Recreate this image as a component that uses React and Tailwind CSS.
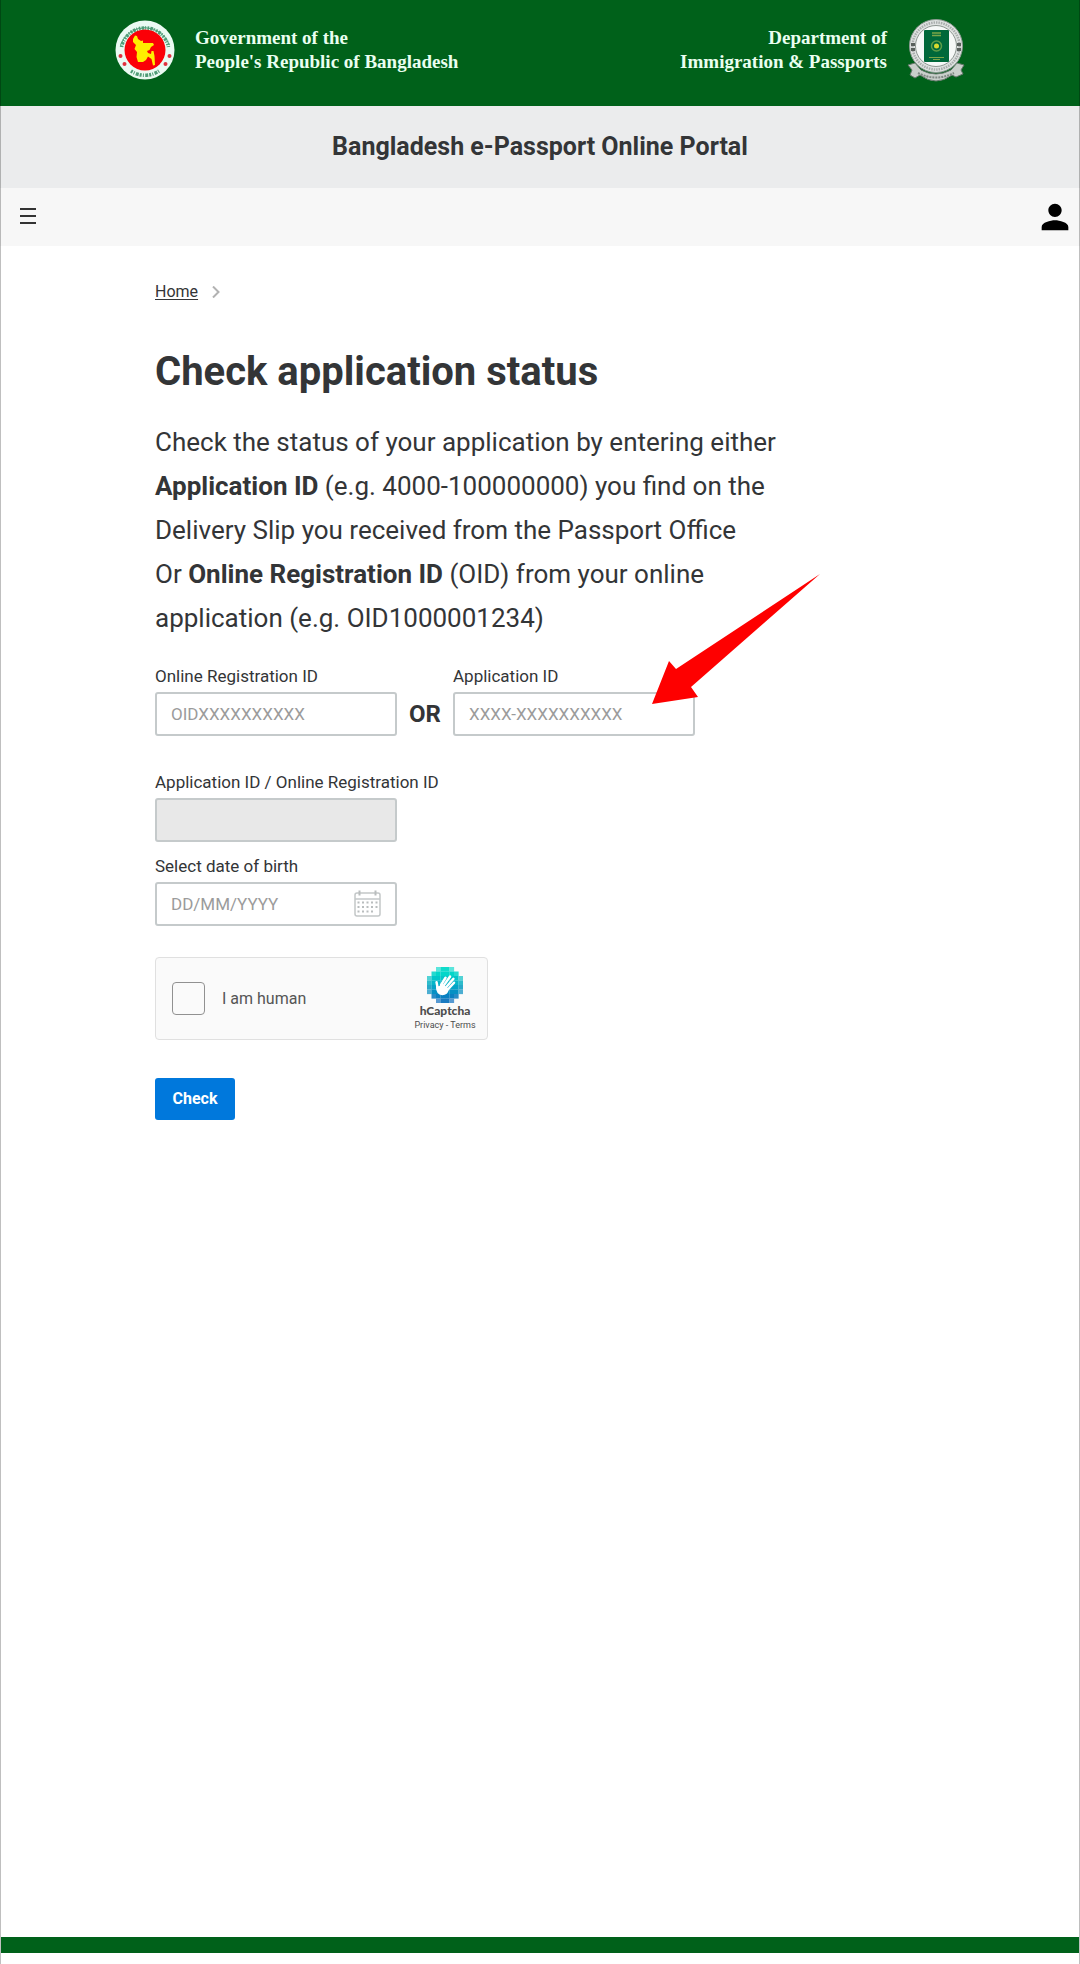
import React, { useState } from "react";
import { MdPerson } from "react-icons/md";

const SIDES = [-1, 1];

function GovernmentSeal() {
  return (
    <svg className="h-15 w-15 shrink-0" viewBox="0 0 60 60" aria-hidden="true">
      <circle cx="30" cy="30" r="29.5" fill="#eafaf2" />
      {/* lettering band */}
      <path d="M6.5 27 A24 24 0 0 1 53.5 27" fill="none" stroke="#4f9c77" strokeWidth="3.5" strokeDasharray="1.6 1.2 2.6 1 1 1.4" />
      <path d="M5.500 25 A26 26 0 0 1 54.500 25" fill="none" stroke="#4f9c77" strokeWidth="1" />
      <path d="M16 51 A25 25 0 0 0 44 51" fill="none" stroke="#4f9c77" strokeWidth="3.5" strokeDasharray="2 1.2 1 1.3 3 1" />
      <circle cx="30" cy="30" r="20.5" fill="#fb0007" />
      {SIDES.map((side) => (
        <g key={side} fill="#e0303c">
          <circle cx={30 + side * 24.5} cy="36" r="2" />
          <circle cx={30 + side * 20.5} cy="44" r="2" />
        </g>
      ))}
      <path
        d="M18 19 L20 15.500 L22 16 L23 19 L26 21 L28 20.500 L28 23 L38 23 L39 25 L36 27 L34.500 30 L32 31 L33 33 L36 34 L36.500 31 L38.500 31 L39.500 36 L40 45 L38 45.500 L36.500 39 L33 36.500 L31 40 L28 42 L23 42 L21.500 37 L22 32 L19.500 29 L21 25 L18 22 Z"
        fill="#ffee00"
      />
    </svg>
  );
}

function PassportSeal() {
  return (
    <svg className="h-16 w-[58px] shrink-0" viewBox="1 0 58 64" aria-hidden="true">
      {/* ribbon */}
      <path d="M2 47 L9 45 L15 52 Q30 60 45 52 L51 45 L58 47 L55 52 L57 56 L50 59 L46 57 Q38 63 30 63 Q22 63 14 57 L9 60 L4 57 L6 52 Z" fill="#c9cfcb" stroke="#66786c" strokeWidth="1" />
      <path d="M12 55 Q30 64 48 55" fill="none" stroke="#7f8883" strokeWidth="2" strokeDasharray="2 1" />
      <circle cx="30" cy="28" r="26.500" fill="#dfe2e1" stroke="#8d9a93" strokeWidth="1" />
      <circle cx="30" cy="28" r="23.500" fill="none" stroke="#a9adac" strokeWidth="2.500" strokeDasharray="1.500 1" />
      <circle cx="30" cy="28" r="20.500" fill="#f6f8f7" stroke="#8d9691" strokeWidth="1" />
      <path d="M5 25h4v3H5z M5 30h4v3H5z M51 25h4v3h-4z M51 30h4v3h-4z" fill="#59605c" />
      <rect x="18" y="12" width="25" height="32" rx="1" fill="#00683a" />
      <path d="M26 15h9M26 17.500h9" stroke="#7ba548" strokeWidth="1.500" />
      <circle cx="30.500" cy="28" r="5" fill="none" stroke="#5e9d48" strokeWidth="1.500" />
      <circle cx="30.500" cy="28" r="2.500" fill="#d8d92f" />
      <path d="M23 39.500h15M27 41.500h7" stroke="#7ba548" strokeWidth="1" />
    </svg>
  );
}

function CalendarIcon() {
  const rows = [12.5, 17, 21.5];
  const cols = [4.5, 9, 13.5, 18, 22.5];
  return (
    <svg className="h-[27px] w-[27px]" viewBox="0 0 27 27" fill="none" aria-hidden="true">
      <rect x="1" y="3" width="25" height="23" rx="2" stroke="#c3c7c8" strokeWidth="1.5" />
      <path d="M1 9h25" stroke="#c3c7c8" strokeWidth="1.5" />
      <path d="M5.500 0.500v5M21.500 0.500v5" stroke="#b9bdbe" strokeWidth="2" />
      {rows.map((y, r) =>
        cols
          .filter((_, c) => r < 2 || c < 4)
          .map((x) => <rect key={`${x}-${y}`} x={x - 1} y={y - 1} width="2" height="2" fill="#b9bdbe" />)
      )}
    </svg>
  );
}

const LOGO_ROWS = [
  { cells: [2, 3, 4, 5], fill: "#10dccb", edge: "#5be5dc" },
  { cells: [1, 2, 3, 4, 5, 6], fill: "#02d6c9", edge: "#25d9cf" },
  { cells: [0, 1, 2, 3, 4, 5, 6, 7], fill: "#02c6c9", edge: "#52d2d5" },
  { cells: [0, 1, 2, 3, 4, 5, 6, 7], fill: "#05b5c8", edge: "#2dbccb" },
  { cells: [0, 1, 2, 3, 4, 5, 6, 7], fill: "#05a3c7", edge: "#29a9c9" },
  { cells: [0, 1, 2, 3, 4, 5, 6, 7], fill: "#0590c4", edge: "#4caed2" },
  { cells: [1, 2, 3, 4, 5, 6], fill: "#0a80c1", edge: "#2a8bc5" },
  { cells: [2, 3, 4, 5], fill: "#1a7ac0", edge: "#5599d2" },
];

function HCaptchaLogo() {
  return (
    <svg className="h-9 w-9" viewBox="0 0 32 32" shapeRendering="geometricPrecision" aria-hidden="true">
      {LOGO_ROWS.map((row, y) =>
        row.cells.map((x, i) => (
          <rect
            key={`${x}-${y}`}
            x={x * 4}
            y={y * 4}
            width="4.1"
            height="4.1"
            fill={i === 0 || i === row.cells.length - 1 ? row.edge : row.fill}
          />
        ))
      )}
      {/* waving hand */}
      <g stroke="#fff" strokeLinecap="round" strokeWidth="2.200">
        <path d="M12.500 16 L16.500 9.500" />
        <path d="M14.500 17 L20.500 8.500" />
        <path d="M17 18 L23.500 10.500" />
        <path d="M18.500 20 L24 14" />
        <path d="M9.500 19 L8.500 13.500" />
      </g>
      <path d="M8 16 Q10.500 18.500 12 15.500 L14 15 L19.500 19.500 Q18.500 25 13.500 25 Q8 24.500 8 18 Z" fill="#fff" />
    </svg>
  );
}

function Field({ id, label, children, ...props }) {
  return (
    <div>
      <label htmlFor={id} className="block whitespace-nowrap pb-1 text-[17px] leading-6">
        {label}
      </label>
      <div className="relative w-[242px]">
        <input
          id={id}
          type="text"
          className="block h-11 w-full rounded-[3px] border-2 border-[#c5cacb] bg-white px-3.5 text-[17px] placeholder:text-[#9b9b9b] disabled:bg-[#e8e8e8]"
          {...props}
        />
        {children}
      </div>
    </div>
  );
}

export default function App() {
  const [registrationId, setRegistrationId] = useState("");
  const [applicationId, setApplicationId] = useState("");
  const [birthDate, setBirthDate] = useState("");

  return (
    <div className="flex min-h-screen flex-col bg-white font-[Roboto,sans-serif] text-[#333537]">
      {/* Header */}
      <header className="border-x border-black/25 bg-[#00611a]">
        <div className="mx-auto flex h-[106px] max-w-[850px] items-center justify-between pb-1.5 font-['Liberation_Serif',serif] text-[19px] font-bold leading-6 text-[#eafff0]">
          <div className="flex items-center gap-5">
            <GovernmentSeal />
            <p>
              Government of the
              <br />
              People's Republic of Bangladesh
            </p>
          </div>
          <div className="flex items-center gap-5 text-right">
            <p>
              Department of
              <br />
              Immigration &amp; Passports
            </p>
            <PassportSeal />
          </div>
        </div>
      </header>

      <div className="border-x border-black/25 bg-[#ebeced] py-6 text-center text-[25px] font-bold leading-[34px]">
        Bangladesh e-Passport Online Portal
      </div>

      {/* Navigation */}
      <nav className="flex h-[58px] items-center justify-between border-x border-black/25 bg-[#f7f7f7] pl-4 pr-1">
        <button type="button" aria-label="Menu" className="p-0.5">
          <svg className="h-[18px] w-[18px]" viewBox="0 0 18 18" stroke="#333" strokeWidth="2" aria-hidden="true">
            <path d="M1 1h16M1 8h16M1 15h16" />
          </svg>
        </button>
        <button type="button" aria-label="Account" className="text-black">
          <MdPerson size={40} />
        </button>
      </nav>

      <main className="flex-1 border-x border-black/25 pt-[34px]">
        <div className="mx-auto max-w-[770px]">
          <div className="flex items-center gap-3.5 text-[16px] leading-6">
            <a href="#home" className="underline underline-offset-2">Home</a>
            <svg className="h-3 w-2" viewBox="0 0 8 12" fill="none" stroke="#b2b2b2" strokeWidth="2" aria-hidden="true">
              <path d="M1 0.500 L6.500 6 L1 11.500" />
            </svg>
          </div>

          <h1 className="mt-11 text-[40px] font-bold leading-[48px]">Check application status</h1>

          <p className="mt-6 text-[26px] leading-[44px]">
            Check the status of your application by entering either
            <br />
            <b>Application ID</b> (e.g. 4000-100000000) you find on the
            <br />
            Delivery Slip you received from the Passport Office
            <br />
            Or <b>Online Registration ID</b> (OID) from your online
            <br />
            application (e.g. OID1000001234)
          </p>

          <form onSubmit={(e) => e.preventDefault()}>
            <div className="mt-6 flex items-end">
              <Field
                id="registration-id"
                label="Online Registration ID"
                placeholder="OIDXXXXXXXXXX"
                value={registrationId}
                onChange={(e) => setRegistrationId(e.target.value)}
              />
              <span className="w-14 text-center text-[24px] font-bold leading-[44px]">OR</span>
              <Field
                id="application-id"
                label="Application ID"
                placeholder="XXXX-XXXXXXXXXX"
                value={applicationId}
                onChange={(e) => setApplicationId(e.target.value)}
              >
                {/* Arrow pointing at the field */}
                <svg
                  className="pointer-events-none absolute bottom-8 left-[199px] h-[130px] w-[168px]"
                  viewBox="0 0 168 130"
                  aria-hidden="true"
                >
                  <path d="M0 130 L17 87 L24 95 L168 0 L39 113 L46 123 Z" fill="#fe0000" />
                </svg>
              </Field>
            </div>

            <div className="mt-[34px]">
              <Field
                id="combined-id"
                label="Application ID / Online Registration ID"
                value={applicationId || registrationId}
                disabled
              />
            </div>

            <div className="mt-3">
              <Field
                id="birth-date"
                label="Select date of birth"
                placeholder="DD/MM/YYYY"
                value={birthDate}
                onChange={(e) => setBirthDate(e.target.value)}
              >
                <button type="button" aria-label="Open calendar" className="absolute right-4 top-2">
                  <CalendarIcon />
                </button>
              </Field>
            </div>

            <div className="mt-[31px] flex h-[83px] w-[333px] items-center justify-between rounded-[4px] border border-[#e0e0e0] bg-[#fafafa] pl-4 pr-2.5">
              <label className="flex items-center gap-[17px] text-[16px] text-[#555]">
                <input
                  type="checkbox"
                  className="h-[33px] w-[33px] appearance-none rounded-[4px] border border-[#919191] bg-[#fafafa] checked:bg-[#00838f]"
                />
                I am human
              </label>
              <div className="flex w-[64px] flex-col items-center text-[#4d4d4d]">
                <HCaptchaLogo />
                <span className="font-[Lato,sans-serif] text-[12px] font-black leading-4">hCaptcha</span>
                <span className="whitespace-nowrap text-[9px] leading-3">
                  <a href="#privacy">Privacy</a> - <a href="#terms">Terms</a>
                </span>
              </div>
            </div>

            <button
              type="submit"
              className="mt-[38px] block h-[42px] w-20 rounded-[3px] bg-[#0078dc] text-[16px] font-bold text-white"
            >
              Check
            </button>
          </form>
        </div>
      </main>

      <footer className="border-x border-black/25 pb-[11px]">
        <div className="h-4 bg-[#00611a]" />
      </footer>
    </div>
  );
}
